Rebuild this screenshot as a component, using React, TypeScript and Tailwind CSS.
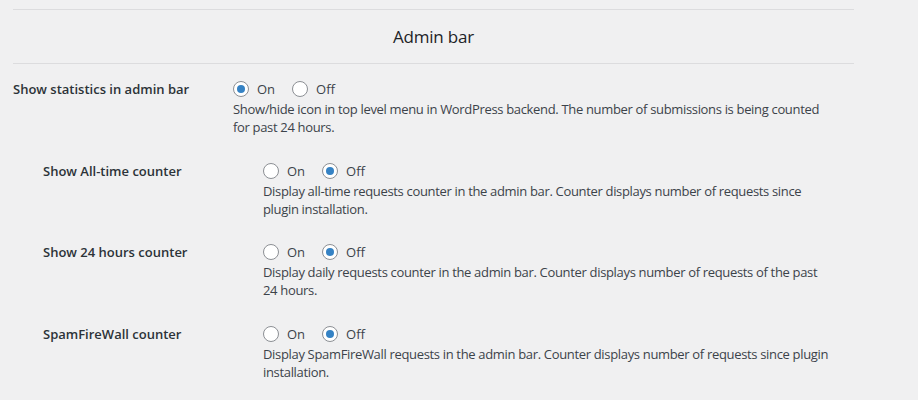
import React from "react";

function Radio({ checked }: { checked: boolean }) {
  return (
    <span className="inline-flex h-4 w-4 shrink-0 items-center justify-center rounded-full border border-[#8c8f94] bg-white">
      {checked && <span className="h-2 w-2 rounded-full bg-[#3582c4]" />}
    </span>
  );
}

function Choice({ on }: { on: boolean }) {
  return (
    <div className="flex h-5 items-center text-[13px] text-[#3c434a]">
      <Radio checked={on} />
      <span className="ml-2 mt-[2px]">On</span>
      <span className="ml-[17px]" />
      <Radio checked={!on} />
      <span className="ml-2 mt-[2px]">Off</span>
    </div>
  );
}

function Row({
  label,
  on,
  lines,
  indent,
  first,
}: {
  label: string;
  on: boolean;
  lines: string[];
  indent: boolean;
  first?: boolean;
}) {
  return (
    <div className={`flex ${indent ? "pl-[43px]" : "pl-[13px]"} ${first ? "mt-[15px]" : "mt-[24.5px]"}`}>
      <div className="w-[220px] shrink-0 text-[13px] font-semibold leading-5 text-[#2c3338]">{label}</div>
      <div>
        <Choice on={on} />
        <div className="mt-[1px] text-[13px] leading-[18px] tracking-[-0.33px] text-[#3c434a] whitespace-nowrap">
          {lines.map((l, i) => (
            <div key={i}>{l}</div>
          ))}
        </div>
      </div>
    </div>
  );
}

export default function App() {
  return (
    <div
      className="h-[400px] w-[918px] overflow-hidden bg-[#f0f0f1] pt-[9px]"
      style={{ fontFamily: '"Open Sans", "Noto Sans", sans-serif' }}
    >
      <div className="ml-[13px] flex h-[55px] w-[841px] items-center justify-center border-y border-[#dcdcde] text-[17px] font-normal tracking-[-0.2px] text-[#1d2327]">
        Admin bar
      </div>
      <Row
        first
        indent={false}
        label="Show statistics in admin bar"
        on={true}
        lines={[
          "Show/hide icon in top level menu in WordPress backend. The number of submissions is being counted",
          "for past 24 hours.",
        ]}
      />
      <Row
        indent
        label="Show All-time counter"
        on={false}
        lines={[
          "Display all-time requests counter in the admin bar. Counter displays number of requests since",
          "plugin installation.",
        ]}
      />
      <Row
        indent
        label="Show 24 hours counter"
        on={false}
        lines={[
          "Display daily requests counter in the admin bar. Counter displays number of requests of the past",
          "24 hours.",
        ]}
      />
      <Row
        indent
        label="SpamFireWall counter"
        on={false}
        lines={[
          "Display SpamFireWall requests in the admin bar. Counter displays number of requests since plugin",
          "installation.",
        ]}
      />
    </div>
  );
}
